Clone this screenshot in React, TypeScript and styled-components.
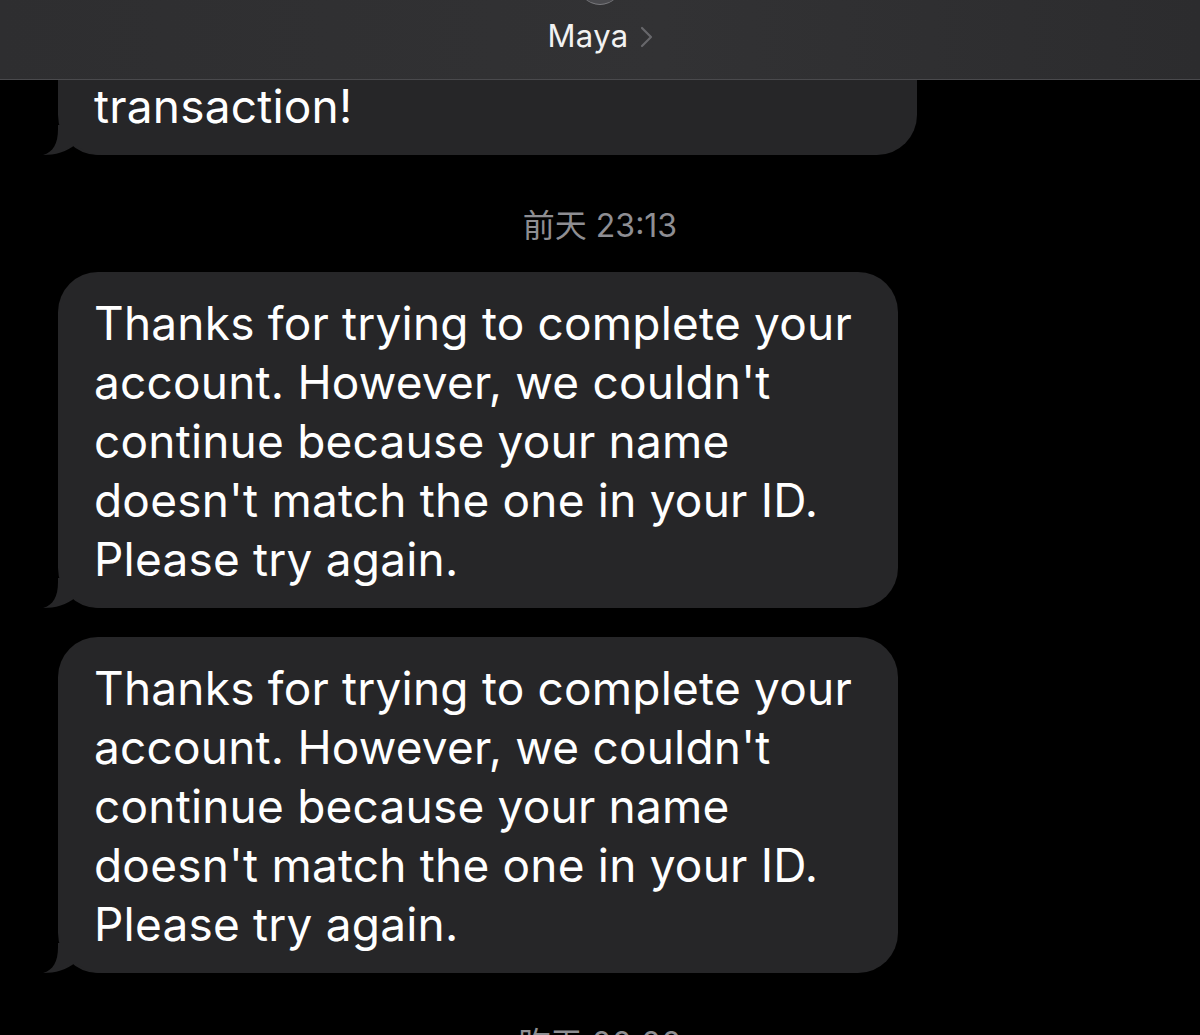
import React from 'react'
import styled, { createGlobalStyle } from 'styled-components'

const messages = [
  ['Thanks for trying to complete your', "account. However, we couldn't", 'continue because your name', "doesn't match the one in your ID.", 'Please try again.'],
  ['Thanks for trying to complete your', "account. However, we couldn't", 'continue because your name', "doesn't match the one in your ID.", 'Please try again.'],
]

const Tail = () => (
  <TailSvg width='60' height='30' viewBox='0 0 60 30'>
    <path d='M16 0 L16 4 C16 19 11 27 1 30 C13 30 25 27 34 19 C41 26 49 30 60 30 L60 0 Z' />
  </TailSvg>
)

const App = () => {
  return (
    <>
      <GlobalStyle />
      <Screen>
        <Header>
          <AvatarEdge />
          <ContactName>
            Maya
            <Chevron width='13' height='22' viewBox='0 0 13 22'>
              <path d='M2 2 L11 11 L2 20' />
            </Chevron>
          </ContactName>
        </Header>
        <Thread>
          <Bubble $width={859} $padTop={77}>
            <Line>transaction!</Line>
            <Tail />
          </Bubble>
          <Stamp>前天 23:13</Stamp>
          {messages.map((lines, i) => (
            <Bubble key={i} $width={840}>
              {lines.map((l) => (
                <Line key={l}>{l}</Line>
              ))}
              <Tail />
            </Bubble>
          ))}
          <Stamp>昨天 00:00</Stamp>
        </Thread>
      </Screen>
    </>
  )
}

const GlobalStyle = createGlobalStyle`
  html, body {
    margin: 0;
    padding: 0;
    background: #000;
  }
  body {
    font-family: Inter, "Noto Sans CJK SC", sans-serif;
    -webkit-font-smoothing: antialiased;
  }
`

const Screen = styled.div`
  position: relative;
  width: 1200px;
  height: 1035px;
  overflow: hidden;
  background: #000;
`

const Header = styled.div`
  position: absolute;
  top: 0;
  left: 0;
  right: 0;
  height: 79px;
  z-index: 2;
  display: flex;
  justify-content: center;
  background: linear-gradient(90deg, #2e2e30 0%, #323234 55%, #2c2c2e 100%);
  border-bottom: 1px solid #4a4a4d;
`

const AvatarEdge = styled.div`
  position: absolute;
  top: -40px;
  left: 578px;
  width: 44px;
  height: 44px;
  border-radius: 50%;
  background: #4a4a4e;
  border-bottom: 1px solid #7a7a7e;
`

const ContactName = styled.div`
  display: flex;
  align-items: center;
  gap: 11px;
  margin-top: 16px;
  height: 38px;
  color: #f2f2f2;
  font-family: Inter, sans-serif;
  font-size: 31px;
  letter-spacing: 0.4px;
`

const Chevron = styled.svg`
  fill: none;
  stroke: #67676b;
  stroke-width: 2.2;
  stroke-linecap: round;
  stroke-linejoin: round;
  margin-top: 3px;
`

const Thread = styled.div`
  display: flex;
  flex-direction: column;
  align-items: flex-start;
  padding-left: 58px;
`

const Bubble = styled.div<{ $width: number; $padTop?: number }>`
  position: relative;
  box-sizing: border-box;
  width: ${(p) => p.$width}px;
  padding: ${(p) => p.$padTop ?? 22}px 36px 19px;
  margin-bottom: 29px;
  background: #262628;
  border-radius: 40px;
  color: #fff;
  font-size: 46px;
  line-height: 59px;
  letter-spacing: 0.2px;
`

const Line = styled.div`
  white-space: nowrap;
`

const TailSvg = styled.svg`
  position: absolute;
  left: -16px;
  bottom: 0;
  fill: #262628;
`

const Stamp = styled.div`
  align-self: stretch;
  margin: 22px 0 26px -58px;
  height: 40px;
  line-height: 40px;
  text-align: center;
  color: #8e8e93;
  font-size: 32px;
  font-family: Inter, "Noto Sans CJK SC", sans-serif;
`

export default App
